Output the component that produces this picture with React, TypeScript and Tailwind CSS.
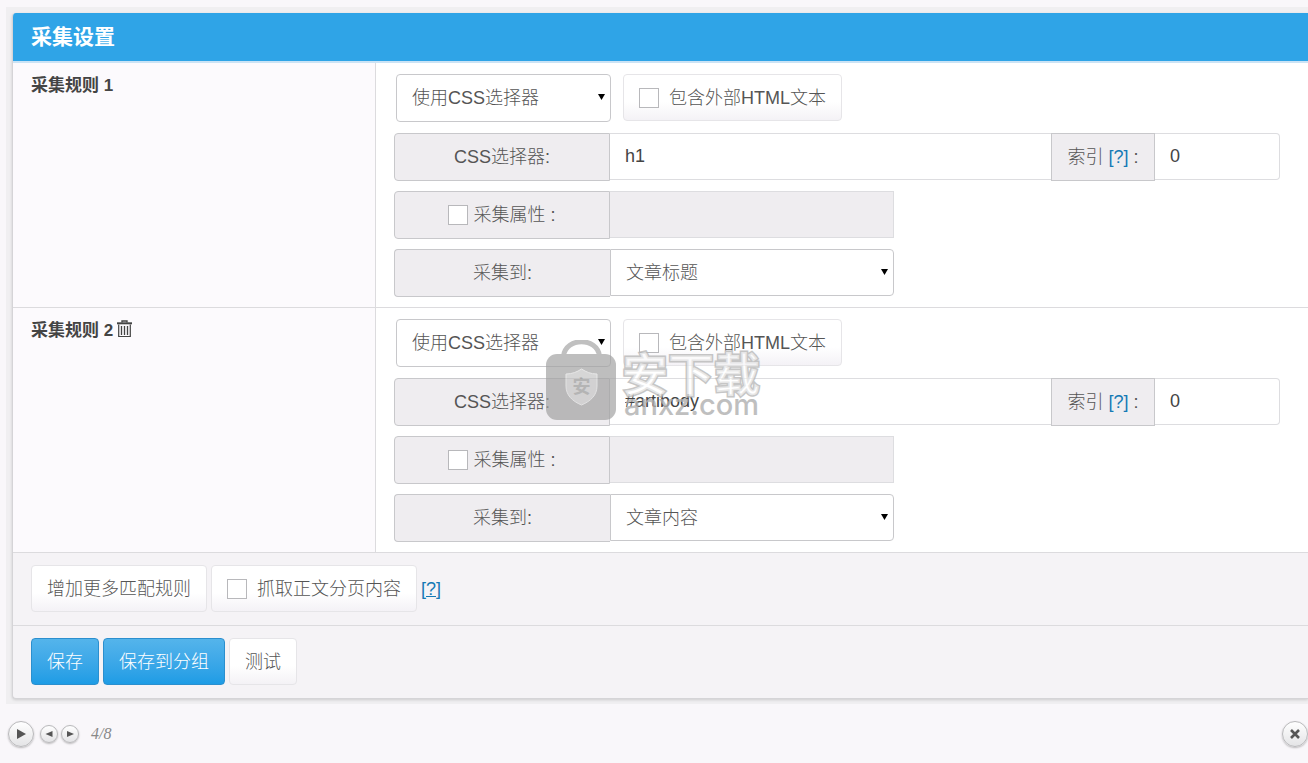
import React, { useState } from 'react';
import clsx from 'clsx';

interface Rule {
  id: number;
  selector: string;
  index: string;
  target: string;
  removable: boolean;
}

const initialRules: Rule[] = [
  { id: 1, selector: 'h1', index: '0', target: '文章标题', removable: false },
  { id: 2, selector: '#artibody', index: '0', target: '文章内容', removable: true },
];

const targetOptions = ['文章标题', '文章内容'];

const addonClass =
  'flex h-12 shrink-0 items-center justify-center border border-[#c8c8cb] bg-[#efedf0] text-[#555]';
const inputClass = 'h-[47px] min-w-0 border border-[#dddde0] bg-white px-[15px] text-[#444] outline-none';
const checkboxClass =
  'h-5 w-5 shrink-0 appearance-none border border-[#b8b8bb] bg-white checked:bg-[#2fa4e7]';
const buttonClass = 'h-[47px] rounded border px-[15px]';
const whiteClass = 'border-[#e6e5e8] bg-linear-to-b from-white from-60% to-[#f4f2f6] text-[#555]';
const blueClass = 'border-[#2b8fce] bg-linear-to-b from-[#54b4eb] to-[#1d9ce5] text-white';
const roundClass =
  'flex items-center justify-center rounded-full border border-[#b9b9bb] bg-linear-to-b from-white to-[#e4e4e6] text-[#555] shadow-[0_1px_2px_rgba(0,0,0,0.25)]';

function Select({
  label,
  defaultValue,
  options,
  className,
  selectClass,
}: {
  label: string;
  defaultValue: string;
  options: string[];
  className?: string;
  selectClass?: string;
}) {
  return (
    <div className={clsx('relative', className)}>
      <select
        aria-label={label}
        defaultValue={defaultValue}
        className={clsx(
          'w-full appearance-none border border-[#c8c8cb] bg-white pr-6 pl-[15px] text-[#555] outline-none',
          selectClass
        )}
      >
        {options.map((option) => (
          <option key={option}>{option}</option>
        ))}
      </select>
      <svg className="pointer-events-none absolute top-5 right-1.5 h-1.5 w-[7px]" viewBox="0 0 7 6">
        <path d="M0 0h7L3.5 6z" fill="#000" />
      </svg>
    </div>
  );
}

function CheckButton({ label }: { label: string }) {
  return (
    <label className={clsx('flex items-center gap-2.5', buttonClass, whiteClass)}>
      <input type="checkbox" className={checkboxClass} />
      {label}
    </label>
  );
}

function TrashIcon() {
  return (
    <svg className="h-[18px] w-[15px]" viewBox="0 0 15 18" fill="none" stroke="#444">
      <path d="M5 2.5V1h5v1.5" strokeWidth="1.4" />
      <path d="M0 3.3h15" strokeWidth="2" />
      <path d="M1.7 4.5v12h11.6v-12" strokeWidth="1.2" />
      <path d="M4.5 6v9M7.5 6v9M10.5 6v9" strokeWidth="1.3" />
    </svg>
  );
}

function Watermark() {
  return (
    <div
      className="pointer-events-none absolute top-8 left-[533px] flex gap-1.5 whitespace-nowrap"
      aria-hidden="true"
    >
      <svg className="h-20 w-[70px] opacity-70" viewBox="0 0 70 80">
        <path d="M17.500 16C20-3 51-3 53.500 16" fill="none" stroke="#a6a6a6" strokeWidth="5" />
        <rect y="14" width="70" height="66" rx="11" fill="#a3a3a3" />
        <path
          d="M20 34c6 0 11-2 15.500-5 5 3 9 5 15.500 5v12c0 9-6 15-15.500 19C26 61 20 55 20 46z"
          fill="#c6c6c6"
          stroke="#dedede"
        />
        <text x="35.500" y="53" textAnchor="middle" fontSize="18" fontWeight="bold" fill="#9c9c9c">
          安
        </text>
      </svg>
      <div className="opacity-80">
        <div className="pt-3 text-[46px] leading-[46px] font-bold text-white/60 [-webkit-text-stroke:3px_#b8b8b8] [paint-order:stroke_fill]">
          安下载
        </div>
        <div className="-mt-2 pl-0.5 font-[Inter,sans-serif] text-[29px] leading-[30px] font-medium text-[#b0b0b0]">
          anxz.com
        </div>
      </div>
    </div>
  );
}

function RuleRow({ rule, onRemove }: { rule: Rule; onRemove: (id: number) => void }) {
  const [withAttr, setWithAttr] = useState(false);

  return (
    <section className="flex border-b border-[#dcdbde]">
      <h2 className="flex w-[363px] shrink-0 items-start gap-1 border-r border-[#dcdbde] bg-[#fcfafd] px-[18px] pt-[11px] text-[17px] leading-6 font-bold text-[#444]">
        采集规则 {rule.id}
        {rule.removable && (
          <button type="button" aria-label="删除规则" className="pt-px" onClick={() => onRemove(rule.id)}>
            <TrashIcon />
          </button>
        )}
      </h2>
      <div className="min-w-0 flex-1 bg-white pt-[11px] pr-7 pb-2.5 pl-[18px]">
        <div className="mb-[11px] flex gap-3 pl-0.5">
          <Select
            label="匹配方式"
            defaultValue="使用CSS选择器"
            options={['使用CSS选择器']}
            className="w-[215px]"
            selectClass="h-12 rounded"
          />
          <CheckButton label="包含外部HTML文本" />
        </div>

        <div className="mb-2.5 flex">
          <label htmlFor={`selector-${rule.id}`} className={clsx('w-54 rounded-l', addonClass)}>
            CSS选择器:
          </label>
          <input
            id={`selector-${rule.id}`}
            defaultValue={rule.selector}
            className={clsx('flex-1 border-x-0', inputClass)}
          />
          <span className={clsx('w-[104px] whitespace-pre', addonClass)}>
            <label htmlFor={`index-${rule.id}`}>索引 </label>
            <a href="#index-help" className="text-[#157ab5]">[?]</a> :
          </span>
          <input
            id={`index-${rule.id}`}
            defaultValue={rule.index}
            className={clsx('w-[125px] rounded-r border-l-0', inputClass)}
          />
        </div>

        <div className="mb-2.5 flex max-w-[500px]">
          <label className={clsx('w-54 gap-[5px] rounded-l', addonClass)}>
            <input
              type="checkbox"
              checked={withAttr}
              onChange={(e) => setWithAttr(e.target.checked)}
              className={checkboxClass}
            />
            采集属性 :
          </label>
          <input
            aria-label="采集属性"
            disabled={!withAttr}
            className={clsx('flex-1 border-l-0 disabled:bg-[#efedf0]', inputClass)}
          />
        </div>

        <div className="flex max-w-[500px]">
          <span className={clsx('w-54 rounded-l border-r-0', addonClass)}>采集到:</span>
          <Select
            label="采集到"
            defaultValue={rule.target}
            options={targetOptions}
            className="flex-1"
            selectClass="h-[47px] rounded-r"
          />
        </div>
      </div>
    </section>
  );
}

export default function App() {
  const [rules, setRules] = useState<Rule[]>(initialRules);

  const addRule = () => {
    const id = Math.max(0, ...rules.map((r) => r.id)) + 1;
    setRules([...rules, { id, selector: '', index: '0', target: '文章内容', removable: true }]);
  };

  const removeRule = (id: number) => setRules(rules.filter((r) => r.id !== id));

  return (
    <div className="min-h-screen bg-[#f9f7fa] pt-[7px] pl-1.5 font-['Liberation_Sans','Noto_Sans_CJK_SC',sans-serif] text-lg font-light">
      <main className="bg-[#f0eff1] pt-1.5 pb-[5px] pl-1.5">
        <form
          className="overflow-hidden rounded-l border-b border-l border-[#d5d4d7] bg-[#f5f3f6] shadow-[0_1px_3px_rgba(0,0,0,0.15)]"
          onSubmit={(e) => e.preventDefault()}
        >
          <h1 className="border-b-2 border-[#cbe3f5] bg-[#2fa4e7] px-[18px] py-2.5 text-[21px] leading-7 font-bold text-white">
            采集设置
          </h1>

          <div className="relative">
            {rules.map((rule) => (
              <RuleRow key={rule.id} rule={rule} onRemove={removeRule} />
            ))}
            <div className="absolute top-[245px] left-0">
              <Watermark />
            </div>
          </div>

          <div className="flex items-center gap-1 border-b border-[#dcdbde] px-[18px] pt-3 pb-[13px]">
            <button type="button" className={clsx(buttonClass, whiteClass)} onClick={addRule}>
              增加更多匹配规则
            </button>
            <CheckButton label="抓取正文分页内容" />
            <a href="#paging-help" className="text-[#157ab5] underline">[?]</a>
          </div>

          <div className="flex gap-1 px-[18px] pt-3 pb-[13px]">
            <button type="submit" className={clsx(buttonClass, blueClass)}>保存</button>
            <button type="button" className={clsx(buttonClass, blueClass)}>保存到分组</button>
            <button type="button" className={clsx(buttonClass, whiteClass)}>测试</button>
          </div>
        </form>
      </main>

      <nav className="flex items-center pt-[17px] pl-0.5">
        <button type="button" aria-label="播放" className={clsx('h-[26px] w-[26px]', roundClass)}>
          <svg className="h-3 w-3" viewBox="0 0 12 12" fill="currentColor">
            <path d="M2 1l9 5-9 5z" />
          </svg>
        </button>
        <button type="button" aria-label="上一张" className={clsx('ml-1.5 h-[18px] w-[18px]', roundClass)}>
          <svg className="h-2 w-2" viewBox="0 0 8 8" fill="currentColor">
            <path d="M7.500 1v6L.5 4z" />
          </svg>
        </button>
        <button type="button" aria-label="下一张" className={clsx('ml-[3px] h-[18px] w-[18px]', roundClass)}>
          <svg className="h-2 w-2" viewBox="0 0 8 8" fill="currentColor">
            <path d="M1 1v6l7-3z" />
          </svg>
        </button>
        <span className="ml-3 font-['Liberation_Serif',serif] text-base text-[#888] italic">4/8</span>
        <button type="button" aria-label="关闭" className={clsx('ml-auto h-[26px] w-[26px]', roundClass)}>
          <svg className="h-2.5 w-2.5" viewBox="0 0 10 10" fill="none" stroke="currentColor" strokeWidth="2.600">
            <path d="M1 1l8 8M9 1L1 9" />
          </svg>
        </button>
      </nav>
    </div>
  );
}
